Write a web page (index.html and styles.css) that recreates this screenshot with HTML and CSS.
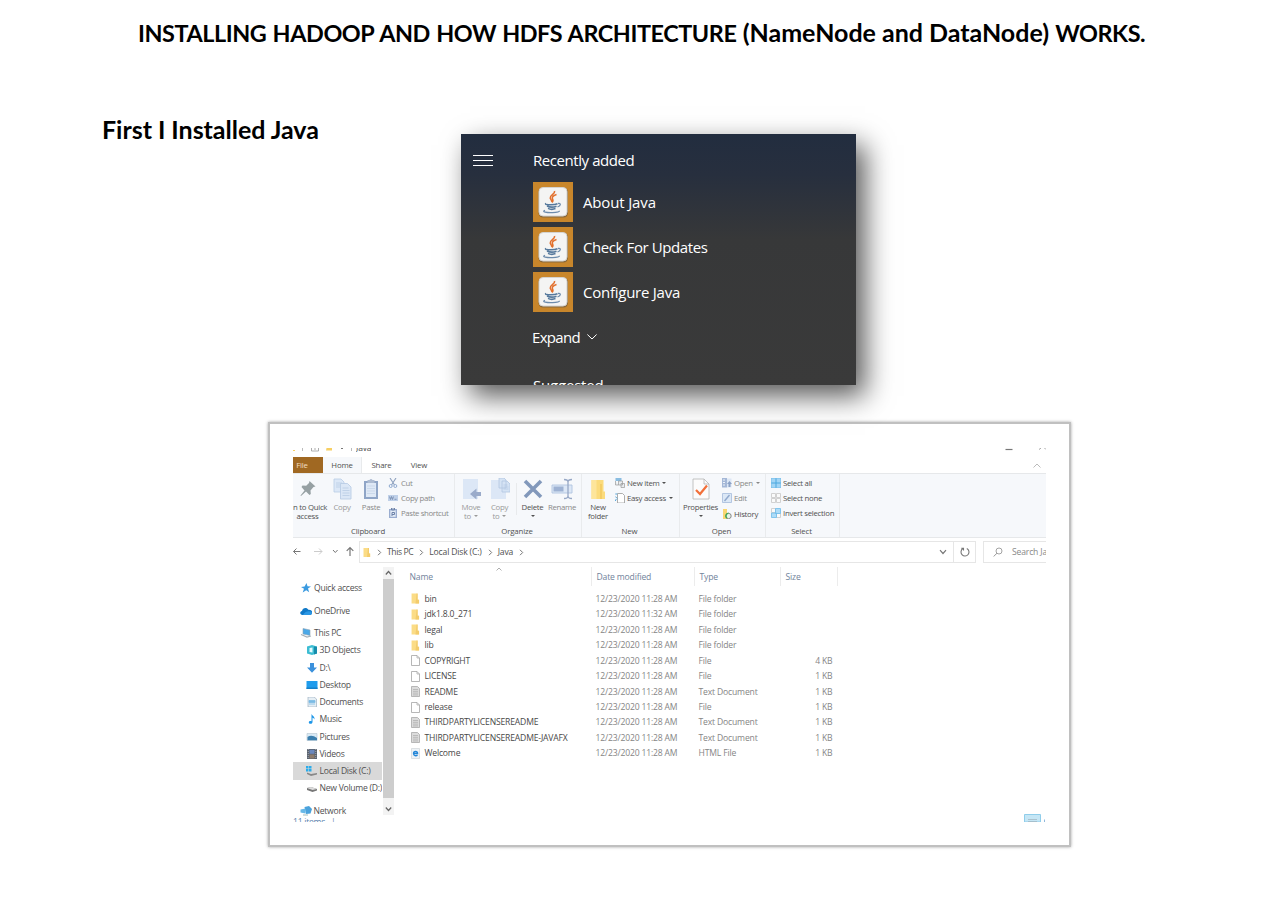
FILE: index.html
```html
<!DOCTYPE html>
<html lang="en">
<head>
<meta charset="utf-8">
<title>Installing Hadoop</title>
<link rel="stylesheet" href="styles.css">
</head>
<body>
<svg class="defs" width="0" height="0">
  <symbol id="java" viewBox="0 0 40 40">
    <rect x="5.5" y="5.5" width="29.5" height="30" rx="4.5" fill="#8a6a3c"/>
    <rect x="6" y="5.5" width="28" height="28.5" rx="4" fill="#f4f4f3" stroke="#d5d3cf" stroke-width="1"/>
    <path d="M21.500 9c1 3-5 4-4.300 7 .4 1.600 1.800 2.300 1.500 4M23.500 12.500c-3 1-5 2.500-4 4.500.7 1.200.8 2.300-.6 3.500" fill="none" stroke="#e2702c" stroke-width="1.500"/>
    <path d="M13 21.500c-1.500.8 1.500 1.300 5 1.200 3 0 5-.4 6.500-1M14 24c2.500 1.200 7 1.200 9.500.2M15 26.400c2 1 5.500 1 7.500.2" fill="none" stroke="#55789c" stroke-width="1.600"/>
    <path d="M25 21.500c3-.8 3.300 2.300-.5 3.500M12 28.400c-4 1.500 2 2.400 7.500 2.200 4 0 7-.9 7-1.800" fill="none" stroke="#6d8bab" stroke-width="1.300"/>
  </symbol>
  <symbol id="folder" viewBox="0 0 8 9"><path d="M.5 0h5v5.500h1.500V9H.5z" fill="#fbdc86"/><path d="M5 0h1v5.500h1.200V9H4z" fill="#f3cc6c"/></symbol>
  <symbol id="file" viewBox="0 0 9 11"><path d="M.5.5h5.500l2.500 2.500v7.500h-8z" fill="#fff" stroke="#a5a5a5" stroke-width=".8"/><path d="M6 .5V3h2.500" fill="none" stroke="#a5a5a5" stroke-width=".7"/></symbol>
  <symbol id="text" viewBox="0 0 9 11"><path d="M.5.5h6l2 2v8h-8z" fill="#dcdcdc" stroke="#a8a8a8" stroke-width=".8"/><path d="M2 3.500h5M2 5.300h5M2 7.100h5M2 8.900h5" stroke="#aaa" stroke-width=".7"/></symbol>
  <symbol id="html" viewBox="0 0 9 11"><path d="M.5.500h8v10h-8z" fill="#eef3f7" stroke="#d0d5d9" stroke-width=".7"/><path d="M2.600 5.500h4c0-2.700-4.100-2.700-4.100 0 0 2.500 2.800 2.700 4 1.500" fill="none" stroke="#2386d8" stroke-width="1.300"/></symbol>
  <symbol id="chev-r" viewBox="0 0 5 7"><path d="M1 .8 3.700 3.500 1 6.200" fill="none" stroke="#777" stroke-width="1"/></symbol>
  <symbol id="chev-d" viewBox="0 0 8 6"><path d="M1 1.200 4 4.500 7 1.200" fill="none" stroke="currentColor" stroke-width="1.200"/></symbol>
</svg>

<h1 class="title"><span class="caps">INSTALLING HADOOP AND HOW HDFS ARCHITECTURE </span><span class="mixed">(NameNode and DataNode)</span><span class="caps"> WORKS.</span></h1>

<section class="intro">
  <h2 class="subtitle">First I Installed Java</h2>
  <div class="start">
    <svg class="burger" viewBox="0 0 20 11"><path d="M0 .5h20M0 5.500h20M0 10.500h20" stroke="#fff"/></svg>
    <div class="start-list">
      <div class="start-head">Recently added</div>
      <div class="app"><svg class="tile"><use href="#java"/></svg><span class="about">About Java</span></div>
      <div class="app"><svg class="tile"><use href="#java"/></svg><span class="check">Check For Updates</span></div>
      <div class="app"><svg class="tile"><use href="#java"/></svg><span class="conf">Configure Java</span></div>
      <div class="expand">Expand <svg class="expand-ic" viewBox="0 0 10 6"><path d="M.4.500 5 5 9.600.500" fill="none" stroke="#fff"/></svg></div>
      <div class="suggested">Suggested</div>
    </div>
  </div>
</section>

<main class="frame">
<div class="explorer">
  <div class="caption">
    <svg class="cap-left" viewBox="0 0 60 9"><path d="M0 2h2v1H0z" fill="#f7cf63"/><path d="M9.500 0v3M58.500 0v3" stroke="#aaa" stroke-width=".8"/><path d="M18.500 0v3h7V0M21 1h2" fill="none" stroke="#999" stroke-width=".8"/><path d="M33.500 0h5.500v2.500h-6z" fill="#f7cf63"/><path d="M48 .5h2" stroke="#777"/></svg>
    <span class="cap-name">Java</span>
    <svg class="cap-right" viewBox="0 0 45 9"><path d="M4.500 1.500h7" stroke="#777" stroke-width="1.200"/><path d="M38 1.500 40 0M45 1.500 43.500 0" stroke="#999" stroke-width=".9"/></svg>
  </div>
  <div class="tabs">
    <span class="tab file">File</span><span class="tab home">Home</span><span class="tab share">Share</span><span class="tab view">View</span>
    <svg class="collapse" viewBox="0 0 8 5"><path d="M.5 4.500 4 1l3.500 3.500" fill="none" stroke="#bbb"/></svg>
  </div>
  <div class="ribbon">
    <div class="group g-clip">
      <div class="tools">
        <div class="big b-pin"><svg viewBox="0 0 20 22"><path d="m11.500 3 6 5.500-2 .5-3 3.500.3 3.500-1.300 1-3.500-3.500L3 18l-.5-.5 4-5L3.500 9l1-1.500 3.700.3L11 5z" fill="#96a0a3"/></svg><span class="pin-text">n to Quick</span><span>access</span></div>
        <div class="big dim b-copy"><svg viewBox="0 0 20 22"><path d="M2 1h7l3 3v10H2z" fill="#dce8f7" stroke="#b9cde6" stroke-width=".8"/><path d="M8.500 5.500h7l3.500 3.500v12H8.500z" fill="#dbe7f6" stroke="#b5c9e3" stroke-width=".8"/><path d="M4 5h6M4 7h4M4 9h4M10.500 10h6M10.500 12.500h7M10.500 15h7M10.500 17.500h7" stroke="#b9cde5" stroke-width=".8"/></svg><span>Copy</span></div>
        <div class="big mid b-paste"><svg viewBox="0 0 20 22"><path d="M3 3h14v18H3z" fill="#8fa5c7"/><path d="M5 5h10v14H5z" fill="#dfe9f6"/><path d="M6.500 2h2c.5-1.500 2.500-1.500 3 0h2v3h-7z" fill="#aebcd2"/><path d="M6 8h8M6 10.500h8M6 13h8M6 15.500h8" stroke="#c3d2e6" stroke-width=".7"/></svg><span>Paste</span></div>
        <div class="smalls s-clip">
          <div class="small mid"><svg viewBox="0 0 10 10"><path d="M2 0l4.500 7M8 0 3.500 7" stroke="#8ea1be" stroke-width="1.100"/><circle cx="2.700" cy="8" r="1.500" fill="none" stroke="#8fa9cf" stroke-width="1"/><circle cx="7.300" cy="8" r="1.500" fill="none" stroke="#8fa9cf" stroke-width="1"/></svg>Cut</div>
          <div class="small mid"><svg viewBox="0 0 10 10"><path d="M0 2h10v6H0z" fill="#bfd0e8"/><path d="m1.500 3.500 1 3 1-3 1 3 1-3M6.500 6.300h2" fill="none" stroke="#7288ac" stroke-width=".8"/></svg>Copy path</div>
          <div class="small mid"><svg viewBox="0 0 10 10"><path d="M1 1h8v9H1z" fill="#9aadd0"/><path d="M2.300 2.300h5.400v6.500H2.300z" fill="#e3ebf6"/><path d="M4 8V4.500h2.500v2H4M3.500 0h3v2h-3z" fill="none" stroke="#6d82a8"/></svg>Paste shortcut</div>
        </div>
      </div>
      <div class="label l-clip">Clipboard</div>
    </div>
    <div class="group g-org">
      <div class="tools">
        <div class="big dim b-move"><svg viewBox="0 0 20 22"><path d="M2 1h15v20H2z" fill="#dce7f6"/><path d="M20 14v4h-4.500v3.500L9 16l6.500-5.500V14z" fill="#9aabca"/></svg><span>Move</span><span>to <i></i></span></div>
        <div class="big dim b-copyto"><svg viewBox="0 0 20 22"><path d="M1 2h15v19H1z" fill="#dce7f6"/><path d="M9 0h5l2 2v8H9zM12 3h5l3 3v8h-8z" fill="#d5e3f4" stroke="#b2c6e2" stroke-width=".8"/><path d="M13.500 7h4M13.500 9h5M13.500 11h5" stroke="#b2c6e2" stroke-width=".7"/></svg><span>Copy</span><span>to <i></i></span></div>
        <div class="rule"></div>
        <div class="big b-del"><svg viewBox="0 0 20 22"><path d="m2 3 16 16M18 3 2 19" stroke="#8298bb" stroke-width="3.600"/></svg><span>Delete</span><span><i></i></span></div>
        <div class="big mid b-ren"><svg viewBox="0 0 22 22"><path d="M1 7h20v8H1z" fill="#dce7f6" stroke="#b0c4e0" stroke-width=".9"/><path d="M2.500 8.500h10v5h-10z" fill="#9eb2d3"/><path d="M13 1.500q4 0 4 2.500v14q0 2.500-4 2.500M21 1.500q-4 0-4 2.500v14q0 2.500 4 2.500" fill="none" stroke="#97a8c6" stroke-width="1.300"/></svg><span>Rename</span></div>
      </div>
      <div class="label">Organize</div>
    </div>
    <div class="group g-new">
      <div class="tools">
        <div class="big b-new"><svg viewBox="0 0 20 22"><path d="M3.500 2h12v11.500h1.500V21h-13.500z" fill="#fbdb7c"/><path d="M3.500 2h5v19h-5z" fill="#fde59b"/><path d="M12 6h2v15h-2z" fill="#f4cd65"/></svg><span>New</span><span>folder</span></div>
        <div class="smalls s-new">
          <div class="small"><svg viewBox="0 0 10 10"><path d="M.5 0h6v3h-6z" fill="#8abde1"/><path d="M.5 3v4h3M3.500 3h4v4h-4zM6 5.500h3.500v4H6z" fill="#e9edf0" stroke="#999" stroke-width=".7"/></svg>New item<i></i></div>
          <div class="small"><svg viewBox="0 0 10 10"><path d="M2.500.5h5l2 2v7.500h-7z" fill="#fff" stroke="#999" stroke-width=".8"/><path d="M.3 1h2M.3 3.500l2 2M.3 8l1-2" stroke="#56a6da" stroke-width="1"/></svg>Easy access<i></i></div>
        </div>
      </div>
      <div class="label">New</div>
    </div>
    <div class="group g-open">
      <div class="tools">
        <div class="big b-prop"><svg viewBox="0 0 20 22"><path d="M2 1h11l5 5v15H2z" fill="#fcfcfc" stroke="#b5b5b5" stroke-width=".8"/><path d="M13 1v5h5" fill="none" stroke="#b5b5b5" stroke-width=".8"/><path d="m5 12 4 4 7-8.500" fill="none" stroke="#f2703a" stroke-width="2.200"/></svg><span>Properties</span><span><i></i></span></div>
        <div class="smalls s-open">
          <div class="small mid"><svg viewBox="0 0 10 10"><path d="M0 0h5v9.500H0z" fill="#a5b8d7"/><path d="M1 2h2M1 4.500h2M1 7h2" stroke="#eef3f9"/><path d="M5 .5h4.500v9H5z" fill="#dce7f5"/><path d="M7.500 3 10 6H8.500v3h-2V6H5z" fill="#8ca2c6"/></svg>Open<i></i></div>
          <div class="small mid"><svg viewBox="0 0 10 10"><path d="M.5.500h9v9h-9z" fill="#dce8f6" stroke="#a5bbda" stroke-width=".8"/><path d="m2.500 8 5-6" stroke="#91a9cd" stroke-width="1.400"/></svg>Edit</div>
          <div class="small"><svg viewBox="0 0 10 10"><path d="M1 0h4v6h1v4H1z" fill="#f9d671"/><circle cx="6.500" cy="7" r="2.700" fill="#e9f4e7" stroke="#888" stroke-width="1"/><path d="M6.500 4.300A2.700 2.700 0 0 0 5 9.200" fill="none" stroke="#3fa954" stroke-width="1.500"/></svg>History</div>
        </div>
      </div>
      <div class="label">Open</div>
    </div>
    <div class="group g-sel">
      <div class="tools">
        <div class="smalls s-sel">
          <div class="small"><svg viewBox="0 0 10 10"><path d="M0 0h10v10H0z" fill="#a2d5f5"/><path d="M5 0v10M0 5h10" stroke="#4ca8df" stroke-width="1"/><path d="M0 0h10v10H0z" fill="none" stroke="#76bde9"/></svg>Select all</div>
          <div class="small"><svg viewBox="0 0 10 10"><path d="M.5.500h4v4h-4zM5.500.500h4v4h-4zM.5 5.500h4v4h-4zM5.500 5.500h4v4h-4z" fill="#fafafa" stroke="#c6c6c6" stroke-width=".8"/></svg>Select none</div>
          <div class="small"><svg viewBox="0 0 10 10"><path d="M.5.500h4v4h-4zM5.500 5.500h4v4h-4z" fill="#fafafa" stroke="#c6c6c6" stroke-width=".8"/><path d="M4.500.500h5v5h-5zM.5 5h5v4.500h-5z" fill="#aedcf8" stroke="#6dbbea" stroke-width=".8"/></svg>Invert selection</div>
        </div>
      </div>
      <div class="label">Select</div>
    </div>
  </div>
  <div class="address">
    <svg class="nav-ic" viewBox="0 0 66 21"><path d="M7.500 10.500H.5M3.500 7.500l-3 3 3 3" fill="none" stroke="#777"/><path d="M21 10.500h8M26 7.500l3 3-3 3" fill="none" stroke="#ccc"/><path d="m40 9 2.300 2.500L44.600 9" fill="none" stroke="#777"/><path d="M57 15V6.500M53.700 9.800 57 6.500l3.300 3.300" fill="none" stroke="#777" stroke-width="1.200"/></svg>
    <div class="path">
      <svg class="path-folder"><use href="#folder"/></svg><svg class="sep"><use href="#chev-r"/></svg><span class="c-pc">This PC</span><svg class="sep"><use href="#chev-r"/></svg><span class="c-disk">Local Disk (C:)</span><svg class="sep"><use href="#chev-r"/></svg><span class="c-java">Java</span><svg class="sep"><use href="#chev-r"/></svg>
      <svg class="drop"><use href="#chev-d"/></svg>
      <div class="refresh"><svg viewBox="0 0 10 10"><path d="M6.800 1.500A4 4 0 1 1 3 1.600M1.300 1.200h2.200v2.200" fill="none" stroke="#777" stroke-width="1.100"/></svg></div>
    </div>
    <div class="search"><svg viewBox="0 0 10 10"><circle cx="6" cy="4" r="3" fill="none" stroke="#999" stroke-width=".9"/><path d="M4 6.200.6 9.500" stroke="#999"/></svg><span>Search Java</span></div>
  </div>
  <div class="body">
    <nav class="tree">
      <div class="node top"><svg viewBox="0 0 12 10"><path d="m6.500 0 1 3.300 3.500.2-3 2 1.200 3.700-3-2-3.500 2.300L4 5.800 1 4l3.600-.5z" fill="#3a9ae0"/></svg>Quick access</div>
      <div class="node top"><svg viewBox="0 0 12 10"><path d="M2.500 9C-.5 9-.3 5.300 2 5c.5-3.500 5-4 6.300-1.200C11 3.500 12.500 5 12 7c-.2 1.300-1 2-2 2z" fill="#1179c8"/><path d="M3 9c1-2.500 4-4 6-3.700C11 5.500 12 6 12 7.300c-.2 1.200-1 1.700-2 1.700z" fill="#2b97e4"/></svg>OneDrive</div>
      <div class="node top"><svg viewBox="0 0 12 10"><path d="m3 .5 7 1.500v5.500L3 6z" fill="#4aa8e8" stroke="#8fa5b3" stroke-width=".6"/><path d="m1 6.500 6 2.500 4-1" fill="none" stroke="#a5b0b8" stroke-width="1.200"/></svg>This PC</div>
      <div class="node"><svg viewBox="0 0 12 10"><path d="M1 1.500 6 0l5 1.500v7L6 10 1 8.500z" fill="#3dbdd3"/><path d="m3.500 3 3-.6v5L3.500 7z" fill="#e6fbff"/><path d="M8 1.500l3 .3v6.700L8 9.500z" fill="#168cab"/></svg>3D Objects</div>
      <div class="node"><svg viewBox="0 0 12 10"><path d="M4 0h4v4.500h3L6 9.800 1 4.500h3z" fill="#3b91dc"/></svg>D:\</div>
      <div class="node"><svg viewBox="0 0 12 10"><path d="M.5 1h11v8H.5z" fill="#1f9cec"/><path d="M.5 7.500h11V9H.5z" fill="#1480c8"/></svg>Desktop</div>
      <div class="node"><svg viewBox="0 0 12 10"><path d="M2 0h6l2.500 2v8H2z" fill="#e6eff5" stroke="#9fb3c2" stroke-width=".7"/><path d="M3 3.500h6v2H3zM3 7h6" fill="#7bbbe4" stroke="#7bbbe4" stroke-width=".8"/></svg>Documents</div>
      <div class="node"><svg viewBox="0 0 12 10"><path d="M5.500 0c.5 2 4 2.500 2.700 5.500-.3-1.400-1.500-1.600-1.700-1.700V8c0 2.300-3.700 2.500-3.700.5 0-1.400 1.600-1.800 2.700-1.300z" fill="#1c96e8"/></svg>Music</div>
      <div class="node"><svg viewBox="0 0 12 10"><path d="M1 1.500h10v7H1z" fill="#d9eaf5" stroke="#b7c4ce" stroke-width=".6"/><path d="M1.500 5q4-3 9.500 1v2.300H1.500z" fill="#3b7fae"/></svg>Pictures</div>
      <div class="node"><svg viewBox="0 0 12 10"><path d="M1 0h10v10H1z" fill="#5a626e"/><path d="M3.500.8h5v4h-5z" fill="#6b88bd"/><path d="M3.500 5.500h5V9.500h-5z" fill="#8d7b6b"/><path d="M2.200 0v10M9.800 0v10" stroke="#c7cad0" stroke-width=".7" stroke-dasharray="1 1"/></svg>Videos</div>
      <div class="node on"><svg viewBox="0 0 12 10"><path d="M0 0h2.500v2.500H0zM3 0h2.500v2.500H3zM0 3h2.500v2.500H0zM3 3h2.500v2.500H3z" fill="#2cacea"/><path d="M1 6.500 5 8l6-1v1.500L5 10 1 8z" fill="#888"/></svg>Local Disk (C:)</div>
      <div class="node"><svg viewBox="0 0 12 10"><path d="m1 5 4-1 6 2v1.500L6.500 9 1 7z" fill="#777"/><path d="m1 5 4-1 6 2-4.500 1z" fill="#ddd"/></svg><span class="vol">New Volume (D:)</span></div>
      <div class="node top net"><svg viewBox="0 0 12 10"><path d="M4.500 1 9 0l3 3-1.500 4.500L6 8z" fill="#4ba2dc"/><path d="m.5 3.500 5-1v5L.5 6.500z" fill="#67b8e8"/><path d="M3 9h5" stroke="#8aa" stroke-width=".8"/></svg>Network</div>
      <div class="status">11 items &nbsp; |</div>
    </nav>
    <div class="scroll"><svg viewBox="0 0 11 12"><path d="m2.800 7.500 2.700-3 2.700 3" fill="none" stroke="#666" stroke-width="1.200"/></svg><div class="thumb"></div><svg viewBox="0 0 11 12"><path d="m2.800 4.500 2.700 3 2.700-3" fill="none" stroke="#666" stroke-width="1.200"/></svg></div>
    <div class="list">
      <div class="row head"><span class="h-name">Name<svg class="sort" viewBox="0 0 6 4"><path d="M.5 3.500 3 1l2.500 2.500" fill="none" stroke="#999" stroke-width=".8"/></svg></span><span>Date modified</span><span>Type</span><span>Size</span></div>
      <div class="row"><svg><use href="#folder"/></svg><b>bin</b><span>12/23/2020 11:28 AM</span><span>File folder</span><em></em></div>
      <div class="row"><svg><use href="#folder"/></svg><b>jdk1.8.0_271</b><span>12/23/2020 11:32 AM</span><span>File folder</span><em></em></div>
      <div class="row"><svg><use href="#folder"/></svg><b>legal</b><span>12/23/2020 11:28 AM</span><span>File folder</span><em></em></div>
      <div class="row"><svg><use href="#folder"/></svg><b>lib</b><span>12/23/2020 11:28 AM</span><span>File folder</span><em></em></div>
      <div class="row"><svg><use href="#file"/></svg><b>COPYRIGHT</b><span>12/23/2020 11:28 AM</span><span>File</span><em>4 KB</em></div>
      <div class="row"><svg><use href="#file"/></svg><b>LICENSE</b><span>12/23/2020 11:28 AM</span><span>File</span><em>1 KB</em></div>
      <div class="row"><svg><use href="#text"/></svg><b>README</b><span>12/23/2020 11:28 AM</span><span>Text Document</span><em>1 KB</em></div>
      <div class="row"><svg><use href="#file"/></svg><b>release</b><span>12/23/2020 11:28 AM</span><span>File</span><em>1 KB</em></div>
      <div class="row"><svg><use href="#text"/></svg><b>THIRDPARTYLICENSEREADME</b><span>12/23/2020 11:28 AM</span><span>Text Document</span><em>1 KB</em></div>
      <div class="row"><svg><use href="#text"/></svg><b>THIRDPARTYLICENSEREADME-JAVAFX</b><span>12/23/2020 11:28 AM</span><span>Text Document</span><em>1 KB</em></div>
      <div class="row"><svg><use href="#html"/></svg><b>Welcome</b><span>12/23/2020 11:28 AM</span><span>HTML File</span><em>1 KB</em></div>
    </div>
    <svg class="views" viewBox="0 0 22 8"><path d="M.5.500h16V8H.5z" fill="#c5e6f5" stroke="#8fcdea"/><path d="M4 5.500h9M4 7.500h9" stroke="#a3b9c4" stroke-width=".8"/><path d="M20.500 5.500V8" stroke="#8fb8dd"/></svg>
  </div>
</div>
</main>
</body>
</html>
```

FILE: styles.css
```css
* { box-sizing: border-box; }
body { margin: 0; width: 1279px; height: 905px; overflow: hidden; background: #fff; color: #000; font-family: "Open Sans", "Noto Sans", sans-serif; }
svg { display: block; flex: none; }
.defs { position: absolute; }
.title, .subtitle { margin: 0; font-family: Lato, sans-serif; font-weight: 700; font-size: 24px; line-height: 30px; white-space: nowrap; }
.title { height: 48px; padding: 17px 0 0 138px; white-space: pre; }
.caps { font-size: 23.400px; letter-spacing: -.43px; word-spacing: 1px; }
.mixed { font-size: 25px; }
.intro { display: flex; align-items: flex-start; height: 374px; padding: 66px 0 0 102px; }
.subtitle { width: 359px; font-size: 25px; letter-spacing: -.03px; }

/* Start menu */
.start { display: flex; width: 395px; height: 251px; margin-top: 20px; padding-left: 12px; overflow: hidden; color: #fff; font-size: 15px; background: linear-gradient(#222d3f 0, #272f3e 16%, #373839 42%, #3a3a3a 100%); box-shadow: 9px 11px 26px rgba(0, 0, 0, .66); white-space: nowrap; }
.burger { width: 20px; height: 11px; margin: 21px 40px 0 0; }
.start-head { height: 48px; padding-top: 16px; line-height: 21px; letter-spacing: -.43px; }
.app { display: flex; align-items: center; gap: 10px; margin-bottom: 5px; }
.about { letter-spacing: -.15px; }
.check { letter-spacing: -.41px; }
.conf { letter-spacing: -.25px; }
.tile { width: 40px; height: 40px; background: #c8862b; }
.expand { display: flex; align-items: center; gap: 7px; height: 39px; margin-left: -1px; letter-spacing: -.7px; }
.expand-ic { width: 10px; height: 6px; }
.suggested { line-height: 20px; padding-top: 19px; letter-spacing: -.2px; }

/* Explorer window */
.frame { width: 803px; height: 425px; margin-left: 268px; padding: 24px 23px 23px; border: 2px solid #c0c0c0; background: #fff; box-shadow: 0 0 3px rgba(0, 0, 0, .35); }
.explorer { width: 753px; height: 374px; overflow: hidden; color: #505050; font-size: 8.600px; line-height: 10px; letter-spacing: -.17px; white-space: nowrap; }
.caption { display: flex; height: 9px; }
.cap-left { width: 60px; height: 9px; }
.cap-name { height: 4px; margin-left: 3px; line-height: 0; overflow: hidden; }
.cap-right { width: 45px; height: 9px; margin-left: auto; }
.tabs { display: flex; align-items: center; height: 16px; font-size: 7.800px; }
.tab { height: 16px; line-height: 16px; text-align: center; }
.file { width: 30px; padding-right: 12px; background: #a06822; color: #f3dfc4; }
.home { width: 39px; background: #f6f8fb; border-right: 1px solid #e8eaec; }
.share { width: 39px; }
.view { width: 36px; }
.collapse { width: 8px; height: 5px; margin: 0 5px 0 auto; }
.ribbon { display: flex; height: 65px; background: #f6f8fb; border-top: 1px solid #e6e8ea; border-bottom: 1px solid #e6e8ea; font-size: 7.800px; letter-spacing: -.28px; }
.group { border-right: 1px solid #e9ebed; }
.g-clip { width: 162px; }
.g-org { width: 127px; }
.g-new { width: 98px; }
.g-open { width: 86px; }
.g-sel { width: 74px; }
.tools { display: flex; height: 52px; }
.label { padding-right: 2px; line-height: 11px; text-align: center; letter-spacing: -.15px; }
.l-clip { padding-right: 11px; }
.big { display: flex; flex-direction: column; align-items: center; padding-top: 4px; }
.big svg { width: 20px; height: 22px; margin-bottom: 2px; }
.big span { display: flex; align-items: center; gap: 2px; height: 9.500px; }
.dim { color: #999; }
.mid { color: #888; }
.b-pin { width: 29px; }
.pin-text { width: 34px; margin-left: 5px; }
.b-copy { width: 40px; }
.b-paste { width: 18px; }
.smalls { padding-top: 1px; }
.small { display: flex; align-items: center; height: 15px; gap: 2px; }
.small svg { width: 10px; height: 10px; }
.s-clip { padding-left: 8px; }
.s-clip .small { gap: 3px; letter-spacing: -.36px; }
i { width: 0; height: 0; margin-left: 1px; border: 2px solid transparent; border-top: 2.500px solid currentColor; border-bottom: 0; }
.b-move { width: 32px; }
.b-copyto { width: 25px; }
.rule { width: 1px; height: 32px; margin: 9px 3px 0 4px; background: #e8eaec; }
.b-del { width: 25px; }
.b-ren { width: 34px; }
.b-ren svg { width: 22px; }
.b-new { width: 32px; }
.s-new { padding-left: 1px; }
.b-prop { width: 41px; }
.s-open { padding-left: 1px; }
.s-open .small { height: 15.500px; }
.s-sel { padding-left: 5px; }
.address { display: flex; height: 25px; padding-top: 3px; }
.nav-ic { width: 66px; height: 21px; }
.path { display: flex; flex: none; align-items: center; width: 617px; height: 22px; padding-left: 3px; border: 1px solid #e6e6e6; }
.path-folder { width: 8px; height: 9px; }
.sep { width: 5px; height: 7px; margin: 0 5px 0 6px; }
.c-pc { letter-spacing: -.4px; }
.c-disk { letter-spacing: -.17px; }
.drop { width: 8px; height: 6px; margin-left: auto; color: #777; }
.refresh { display: flex; align-items: center; width: 22px; height: 20px; margin-left: 6px; padding-left: 6px; border-left: 1px solid #e6e6e6; }
.refresh svg { width: 10px; height: 10px; }
.search { display: flex; flex: none; align-items: center; gap: 9px; width: 80px; height: 22px; margin-left: 7px; padding-left: 9px; border: 1px solid #e6e6e6; color: #888; }
.search svg { width: 10px; height: 10px; }
.body { display: flex; height: 259px; }
.tree { width: 89px; overflow: hidden; padding-top: 11px; letter-spacing: -.26px; }
.node { display: flex; align-items: center; gap: 2px; height: 17.220px; padding-left: 12.500px; }
.node svg { width: 12px; height: 10px; }
.top { margin-top: 5.400px; padding-left: 7px; }
.net { padding-left: 6.500px; }
.on { background: #d9d9d9; }
.status { margin-top: -2px; color: #5b84ae; }
.scroll { width: 11px; height: 248px; margin: 4px 0 0 .5px; background: #f3f3f3; }
.scroll svg { width: 11px; height: 12px; }
.thumb { width: 11px; height: 219px; margin: 0 0 5px; background: #cdcdcd; }
.list { width: 452px; padding-top: 4px; }
.row { display: grid; grid-template-columns: 13.500px 171px 103px 83px 51px; align-items: center; height: 15.470px; padding-left: 17.500px; color: #858585; }
.row svg { width: 9px; height: 11px; }
.row b { font-weight: 400; color: #484848; }
.row em { font-style: normal; text-align: right; }
.head { grid-template-columns: 182px 103px 86px 57px; height: 19px; margin-bottom: 5px; padding-left: 16px; color: #71839b; }
.head span { height: 19px; line-height: 20px; padding-left: 5px; border-right: 1px solid #ececec; }
.head .h-name { display: flex; gap: 63px; padding-left: 0; }
.row .sort { width: 6px; height: 4px; }
.views { width: 22px; height: 8px; margin: 251px 0 0 auto; }
```
